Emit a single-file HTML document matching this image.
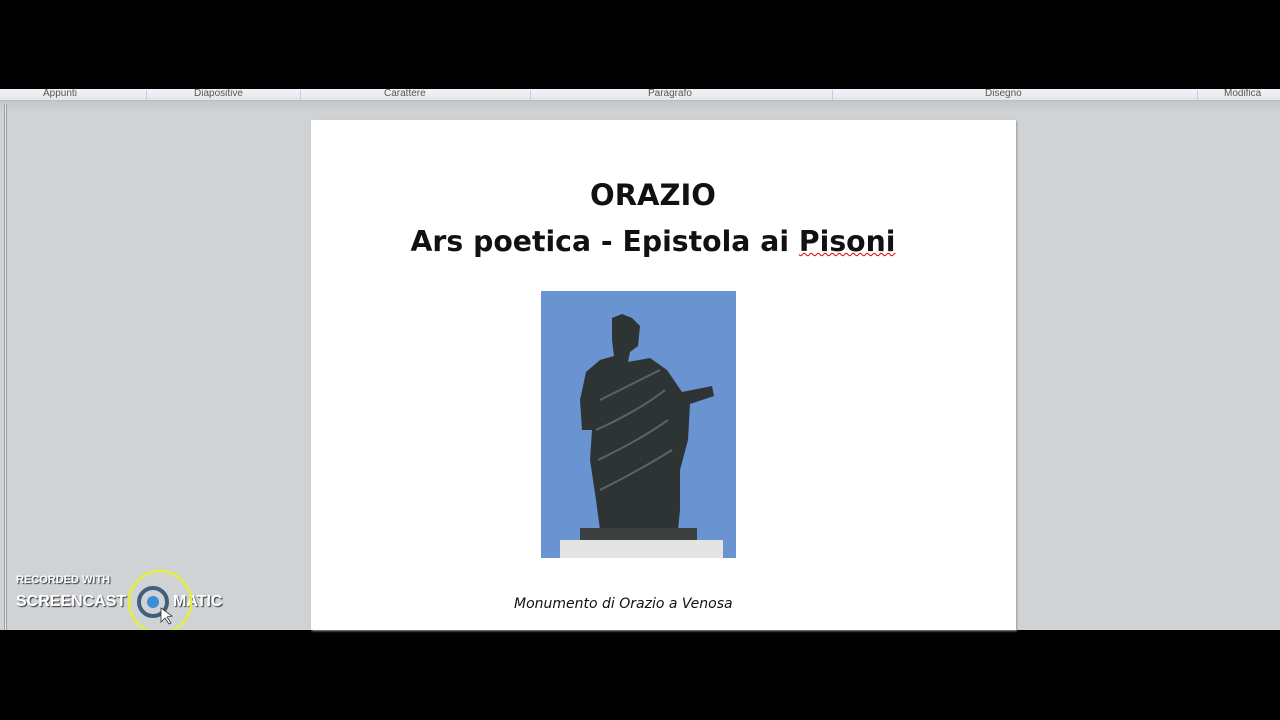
<!DOCTYPE html>
<html><head><meta charset="utf-8"><style>
*{margin:0;padding:0;box-sizing:border-box}
body{width:1280px;height:720px;background:#000;position:relative;overflow:hidden;font-family:"Liberation Sans",sans-serif}
.rib{position:absolute;left:0;top:89px;width:1280px;height:12px;background:linear-gradient(#f2f4f7,#e3e7ec);border-bottom:1px solid #b9bec5}
.rib span{position:absolute;top:-1px;font-size:10px;color:#555}
.sep{position:absolute;top:1px;width:1px;height:10px;background:#c8ccd2}
.bg{position:absolute;left:0;top:101px;width:1280px;height:529px;background:linear-gradient(#c3c7cb,#d0d3d6 12px,#d0d3d6)}
.vl{position:absolute;left:4px;top:104px;width:3px;height:526px;border-left:1px solid #9aa0a6;border-right:1px solid #9aa0a6;background:#e8e8e8}
.slide{position:absolute;left:311px;top:120px;width:705px;height:510px;background:#fff;box-shadow:1px 1px 2px #999}
.t{position:absolute;left:311px;width:684px;text-align:center;font-family:"DejaVu Sans","Liberation Sans",sans-serif;font-weight:bold;color:#111;white-space:nowrap}
.cap{position:absolute;left:514px;top:596px;font-family:"DejaVu Sans",sans-serif;font-style:italic;font-size:14px;color:#111}
.sc{position:absolute;left:16px;font-weight:bold;color:#fff;text-shadow:1px 1px 1px #333}
</style></head><body>
<div class="rib">
<span style="left:43px">Appunti</span><span style="left:194px">Diapositive</span><span style="left:384px">Carattere</span><span style="left:648px">Paragrafo</span><span style="left:985px">Disegno</span><span style="left:1224px">Modifica</span>
<div class="sep" style="left:146px"></div><div class="sep" style="left:300px"></div><div class="sep" style="left:530px"></div><div class="sep" style="left:832px"></div><div class="sep" style="left:1197px"></div>
</div>
<div class="bg"></div>
<div class="vl"></div>
<div class="slide"></div>
<div class="t" style="top:178px;font-size:29px">ORAZIO</div>
<div class="t" style="top:225px;font-size:28.3px">Ars poetica - Epistola ai <span style="text-decoration:underline wavy #d00;text-decoration-thickness:1px">Pisoni</span></div>
<svg style="position:absolute;left:541px;top:291px" width="195" height="267" viewBox="541 291 195 267">
<rect x="541" y="291" width="195" height="267" fill="#6a93d1"/>
<path d="M612 318 L622 314 L632 318 L640 326 L638 346 L630 352 L628 362 L650 358 L667 370 L682 392 L712 386 L714 396 L690 404 L688 440 L680 470 L680 510 L678 530 L600 530 L596 500 L590 460 L592 430 L582 430 L580 400 L586 372 L600 360 L614 356 L612 340 Z" fill="#2e3434"/>
<path d="M600 400 Q640 380 660 370 M596 430 Q640 410 665 390 M598 460 Q640 440 668 420 M600 490 Q640 470 672 450" stroke="#5a6466" stroke-width="2" fill="none"/>
<rect x="580" y="528" width="117" height="22" fill="#3b4040"/>
<rect x="560" y="540" width="163" height="18" fill="#e4e4e2"/>
</svg>
<div class="cap">Monumento di Orazio a Venosa</div>
<div class="sc" style="top:574px;font-size:11px">RECORDED WITH</div>
<div class="sc" style="top:593px;font-size:16px">SCREENCAST</div>
<div class="sc" style="top:593px;left:173px;font-size:16px">MATIC</div>
<svg style="position:absolute;left:125px;top:568px" width="75" height="62">
<circle cx="35" cy="34" r="31" fill="none" stroke="#e6ee3a" stroke-width="2.5"/>
<circle cx="28" cy="34" r="14" fill="none" stroke="#3f5f7c" stroke-width="4"/>
<circle cx="28" cy="34" r="6" fill="#3b8fd6"/>
<path d="M36 40 L36 54 L40 50 L44 56 L46 55 L42 49 L47 48 Z" fill="#fff" stroke="#333" stroke-width="0.8"/>
</svg>
</body></html>
